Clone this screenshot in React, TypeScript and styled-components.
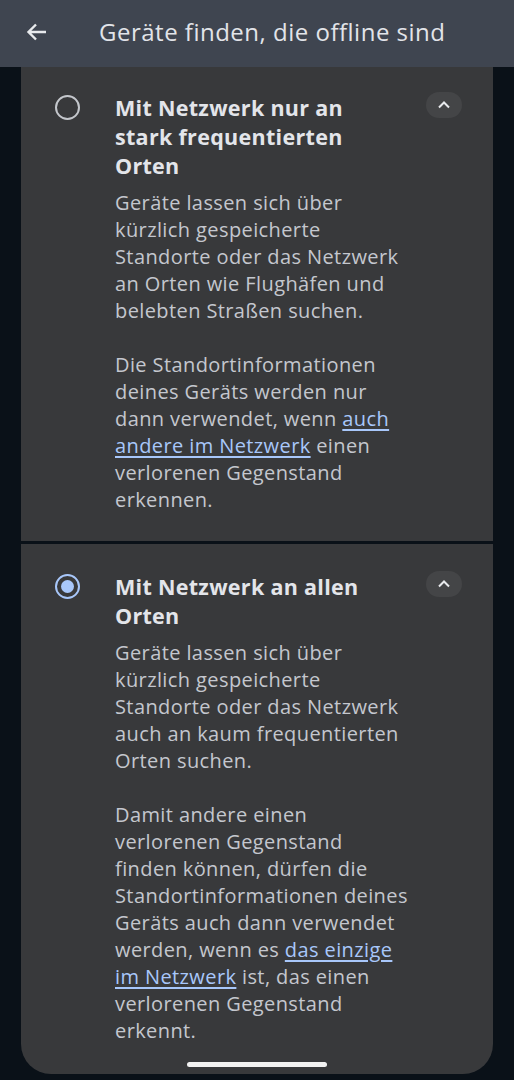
import React from "react";
import styled, { createGlobalStyle } from "styled-components";

const GlobalStyle = createGlobalStyle`
  html, body {
    margin: 0;
    padding: 0;
    background: #0a1118;
  }
  body {
    font-family: "Open Sans", Roboto, sans-serif;
  }
`;

const Page = styled.div`
  width: 514px;
  min-height: 1080px;
  background: #0a1118;
  overflow: hidden;
`;

const Header = styled.header`
  height: 67px;
  background: #3f4550;
  display: flex;
  align-items: center;
  padding-left: 24px;
  gap: 49px;
  box-sizing: border-box;
`;

const BackButton = styled.button`
  width: 26px;
  height: 26px;
  padding: 0;
  border: 0;
  background: none;
  display: flex;
  align-items: center;
  justify-content: center;
  margin-top: -4px;
`;

const Title = styled.h1`
  margin: 0;
  margin-top: -4px;
  font-size: 24px;
  font-weight: 400;
  letter-spacing: 0.5px;
  color: #e2e4e9;
`;

const List = styled.div`
  display: flex;
  flex-direction: column;
  gap: 3px;
  padding: 0 21px;
`;

const Card = styled.section<{ $last?: boolean }>`
  background: #38393b;
  display: grid;
  grid-template-columns: 25px minmax(0, 1fr) 36px;
  column-gap: 35px;
  align-items: start;
  padding: ${(p) => (p.$last ? "28px 31px 30px 34px" : "26px 31px 28px 34px")};
  border-radius: ${(p) => (p.$last ? "0 0 30px 30px" : "0")};
`;

const Radio = styled.span<{ $checked?: boolean }>`
  width: 25px;
  height: 25px;
  box-sizing: border-box;
  border-radius: 50%;
  border: 2.5px solid ${(p) => (p.$checked ? "#a8c7fa" : "#c4c7cc")};
  display: flex;
  align-items: center;
  justify-content: center;
  margin-top: 2px;

  &::after {
    content: "";
    width: 13px;
    height: 13px;
    border-radius: 50%;
    background: ${(p) => (p.$checked ? "#a8c7fa" : "transparent")};
  }
`;

const Content = styled.div`
  display: flex;
  flex-direction: column;
  gap: 10px;
`;

const OptionTitle = styled.div`
  font-size: 21.5px;
  line-height: 29px;
  font-weight: 700;
  letter-spacing: 0.3px;
  color: #e3e5ea;
  white-space: nowrap;
`;

const Body = styled.p`
  margin: 0;
  margin-top: -1px;
  font-size: 20px;
  line-height: 27px;
  letter-spacing: 0.4px;
  color: #c4c7ce;
  white-space: nowrap;
`;

const Link = styled.a`
  color: #a8c7fa;
  text-decoration: underline;
  text-underline-offset: 3px;
  text-decoration-thickness: 1.5px;
`;

const Collapse = styled.button`
  width: 36px;
  height: 26px;
  border: 0;
  border-radius: 13px;
  background: #444547;
  padding: 0;
  display: flex;
  align-items: center;
  justify-content: center;
  margin-top: -1px;
`;

const HomeBar = styled.div`
  position: fixed;
  left: 187px;
  top: 1062px;
  width: 140px;
  height: 5px;
  border-radius: 3px;
  background: #f2f2f2;
`;

const Chevron = () => (
  <svg width="14" height="10" viewBox="0 0 14 10">
    <path d="M2 7.5 L7 2.5 L12 7.5" fill="none" stroke="#e8eaed" strokeWidth="2" />
  </svg>
);

const BackArrow = () => (
  <svg width="24" height="24" viewBox="0 0 24 24">
    <path
      d="M21 12 H4 M11 4.5 L3.5 12 L11 19.5"
      fill="none"
      stroke="#e8eaed"
      strokeWidth="2.4"
    />
  </svg>
);

const App = () => {
  return (
    <Page>
      <GlobalStyle />
      <Header>
        <BackButton aria-label="Zurück">
          <BackArrow />
        </BackButton>
        <Title>Geräte finden, die offline sind</Title>
      </Header>
      <List>
        <Card>
          <Radio />
          <Content>
            <OptionTitle>
              Mit Netzwerk nur an
              <br />
              stark frequentierten
              <br />
              Orten
            </OptionTitle>
            <Body>
              Geräte lassen sich über
              <br />
              kürzlich gespeicherte
              <br />
              Standorte oder das Netzwerk
              <br />
              an Orten wie Flughäfen und
              <br />
              belebten Straßen suchen.
              <br />
              <br />
              Die Standortinformationen
              <br />
              deines Geräts werden nur
              <br />
              dann verwendet, wenn <Link>auch</Link>
              <br />
              <Link>andere im Netzwerk</Link> einen
              <br />
              verlorenen Gegenstand
              <br />
              erkennen.
            </Body>
          </Content>
          <Collapse aria-label="Einklappen">
            <Chevron />
          </Collapse>
        </Card>
        <Card $last>
          <Radio $checked />
          <Content>
            <OptionTitle>
              Mit Netzwerk an allen
              <br />
              Orten
            </OptionTitle>
            <Body>
              Geräte lassen sich über
              <br />
              kürzlich gespeicherte
              <br />
              Standorte oder das Netzwerk
              <br />
              auch an kaum frequentierten
              <br />
              Orten suchen.
              <br />
              <br />
              Damit andere einen
              <br />
              verlorenen Gegenstand
              <br />
              finden können, dürfen die
              <br />
              Standortinformationen deines
              <br />
              Geräts auch dann verwendet
              <br />
              werden, wenn es <Link>das einzige</Link>
              <br />
              <Link>im Netzwerk</Link> ist, das einen
              <br />
              verlorenen Gegenstand
              <br />
              erkennt.
            </Body>
          </Content>
          <Collapse aria-label="Einklappen">
            <Chevron />
          </Collapse>
        </Card>
      </List>
      <HomeBar />
    </Page>
  );
};

export default App;
